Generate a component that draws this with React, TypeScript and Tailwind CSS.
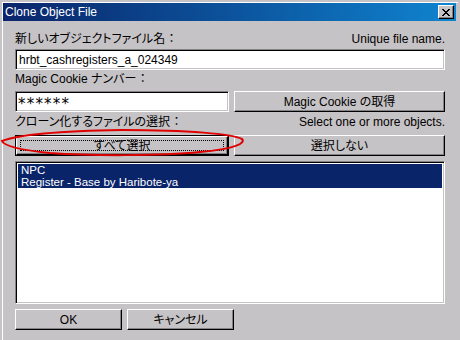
import React from "react";

const raised =
  "border border-t-white border-l-white border-r-black border-b-black shadow-[inset_-1px_-1px_0_#848284]";
const sunken =
  "border border-t-[#848284] border-l-[#848284] border-r-white border-b-white shadow-[inset_1px_1px_0_#000000,inset_-1px_-1px_0_#c6c3c6]";

function Btn({ children, className = "" }: { children: React.ReactNode; className?: string }) {
  return (
    <div className={`h-[21px] flex items-center justify-center bg-[#c6c3c6] ${raised} ${className}`}>
      {children}
    </div>
  );
}

export default function App() {
  return (
    <div
      className="w-[460px] h-[340px] bg-[#c6c3c6] overflow-hidden relative text-black text-[12px] leading-[14px] [font-feature-settings:'palt']"
      style={{ fontFamily: '"Liberation Sans", "Noto Sans CJK JP", sans-serif' }}
    >
      <div className="ml-[2px] mt-[2px] h-[340px] w-[456px] border-l border-t border-white">
        {/* title bar */}
        <div className="h-[18px] w-[453px] flex items-center justify-between bg-gradient-to-r from-[#0a246a] to-[#1084d0] pl-[2px] pr-[2px]">
          <span className="text-white text-[12px] leading-[14px]">Clone Object File</span>
          <div className={`w-[16px] h-[14px] bg-[#c6c3c6] flex items-center justify-center ${raised}`}>
            <svg width="8" height="7" viewBox="0 0 8 7">
              <path d="M0 0h2v1h-2zM6 0h2v1h-2z M1 1h2v1h-2zM5 1h2v1h-2z M2 2h4v1h-4z M3 3h2v1h-2z M2 4h4v1h-4z M1 5h2v1h-2zM5 5h2v1h-2z M0 6h2v1h-2zM6 6h2v1h-2z" fill="#000" />
            </svg>
          </div>
        </div>

        {/* content */}
        <div className="pl-[12px] w-[442px] flex flex-col">
          <div className="mt-[11px] h-[14px] flex justify-between items-center">
            <span>新しいオブジェクトファイル名 ：</span>
            <span>Unique file name.</span>
          </div>
          <div className={`mt-[3px] h-[21px] w-[430px] bg-white flex items-center pl-[3px] ${sunken}`}>
            hrbt_cashregisters_a_024349
          </div>

          <div className="mt-[2px] h-[14px] flex items-center">
            <span>Magic Cookie ナンバー ：</span>
          </div>
          <div className="mt-[5px] flex gap-[5px]">
            <div className={`h-[21px] w-[214px] bg-white flex items-center pl-[2px] overflow-hidden ${sunken}`}>
              <span
                className="tracking-[1.2px] text-[15px] leading-[15px] pt-[6px]"
                style={{ fontFamily: '"DejaVu Sans", sans-serif' }}
              >
                ******
              </span>
            </div>
            <Btn className="w-[211px]">Magic Cookie の取得</Btn>
          </div>

          <div className="mt-[3px] h-[14px] flex justify-between items-center">
            <span>クローン化するファイルの選択 ：</span>
            <span>Select one or more objects.</span>
          </div>
          <div className="mt-[6px] flex gap-[5px]">
            <div className="w-[214px] h-[21px] border border-black">
              <div className={`relative h-full flex items-center justify-center bg-[#c6c3c6] ${raised}`}>
                <div className="absolute inset-[3px] border border-dotted border-black" />
                <span>すべて選択</span>
              </div>
            </div>
            <Btn className="w-[211px]">選択しない</Btn>
          </div>

          <div className={`mt-[5px] h-[143px] w-[430px] bg-white p-[2px] ${sunken}`}>
            <div className="bg-[#0a246a] text-white h-[12px] text-[11.5px] leading-[12px] pl-[3px] overflow-hidden">NPC</div>
            <div className="bg-[#0a246a] text-white h-[12px] text-[11.5px] leading-[12px] pl-[3px] overflow-hidden">Register - Base by Haribote-ya</div>
          </div>

          <div className="mt-[5px] flex gap-[5px]">
            <Btn className="w-[107px]">OK</Btn>
            <Btn className="w-[107px]">キャンセル</Btn>
          </div>
        </div>
      </div>

      {/* red annotation ellipse */}
      <svg className="absolute left-0 top-[126px] pointer-events-none" width="250" height="34" viewBox="0 0 250 34">
        <path
          d="M2 15 C 20 8, 60 5, 122 4 C 190 4, 232 8, 242 13 C 246 17, 235 23, 200 26 C 160 30, 90 30, 50 27 C 20 24, 4 20, 2 15 Z"
          fill="none"
          stroke="#e00000"
          strokeWidth="2"
        />
      </svg>
    </div>
  );
}
